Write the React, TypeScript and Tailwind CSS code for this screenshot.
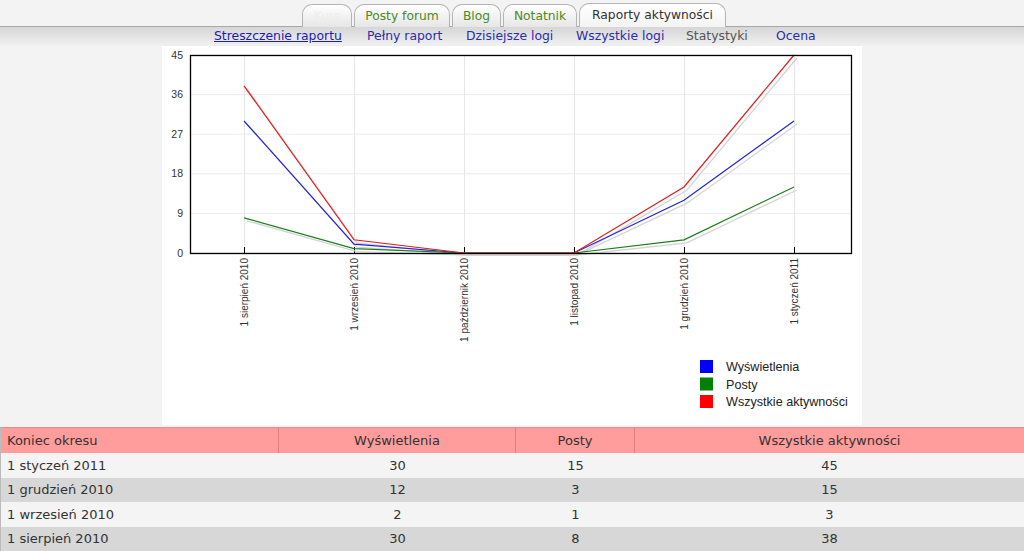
import React from "react";

const xs = [82, 192, 302, 412, 522, 632];
const yv = (v: number) => 207 - v * 4.4;
const series = [
  { color: "#2222dd", data: [30, 2, 0, 0, 12, 30] },
  { color: "#1b7d1b", data: [8, 1, 0, 0, 3, 15] },
  { color: "#e21b1b", data: [38, 3, 0, 0, 15, 45] },
];
const labels = [
  "1 sierpień 2010",
  "1 wrzesień 2010",
  "1 październik 2010",
  "1 listopad 2010",
  "1 grudzień 2010",
  "1 styczeń 2011",
];

function Chart() {
  const pts = (d: number[], dx = 0, dy = 0) =>
    d.map((v, i) => `${xs[i] + dx},${Math.min(yv(v) + dy, 209)}`).join(" ");
  return (
    <svg width="700" height="379" viewBox="0 0 700 379" style={{ fontFamily: "'Liberation Sans', Arial, sans-serif" }}>
      {[0, 9, 18, 27, 36, 45].map((t) => (
        <g key={t}>
          <line x1={28} x2={689} y1={yv(t)} y2={yv(t)} stroke="#ececec" strokeWidth="1" />
          <text x={21} y={yv(t) + 3.5} fontSize="10.5" fill="#333" textAnchor="end">
            {t}
          </text>
        </g>
      ))}
      {xs.map((x) => (
        <line key={x} x1={x + 0.5} x2={x + 0.5} y1={9} y2={207} stroke="#e6e6e6" strokeWidth="1" />
      ))}
      {xs.map((x) => (
        <line key={"t" + x} x1={x + 0.5} x2={x + 0.5} y1={201} y2={207} stroke="#000" strokeWidth="1" />
      ))}
      {series.map((s) => (
        <polyline key={"s" + s.color} points={pts(s.data, 3, 3)} fill="none" stroke="#d4d4d4" strokeWidth="1.3" />
      ))}
      {series.map((s) => (
        <polyline key={s.color} points={pts(s.data)} fill="none" stroke={s.color} strokeWidth="1.2" />
      ))}
      <rect x={28.5} y={9.5} width={661} height={198} fill="none" stroke="#000" strokeWidth="1.3" />
      {labels.map((l, i) => (
        <text
          key={l}
          transform={`translate(${xs[i] + 4},212) rotate(-90)`}
          textAnchor="end"
          fontSize="10"
          fill="#333"
        >
          {l}
        </text>
      ))}
      {[
        ["#0000ff", "Wyświetlenia"],
        ["#008000", "Posty"],
        ["#ff0000", "Wszystkie aktywności"],
      ].map(([c, t], i) => (
        <g key={t}>
          <rect x={538} y={314 + i * 17.5} width={13} height={13} fill={c} />
          <text x={564} y={325 + i * 17.5} fontSize="12.6" fill="#222">
            {t}
          </text>
        </g>
      ))}
    </svg>
  );
}

const tabs = [
  { t: "Kurs", w: "w-[50px]", c: "text-[#eeeeee]" },
  { t: "Posty forum", w: "w-[96px]", c: "text-[#4e8a22]" },
  { t: "Blog", w: "w-[49px]", c: "text-[#4e8a22]" },
  { t: "Notatnik", w: "w-[74px]", c: "text-[#4e8a22]" },
];

const rows = [
  ["1 styczeń 2011", "30", "15", "45"],
  ["1 grudzień 2010", "12", "3", "15"],
  ["1 wrzesień 2010", "2", "1", "3"],
  ["1 sierpień 2010", "30", "8", "38"],
];

export default function App() {
  return (
    <div
      className="w-[1024px] h-[551px] overflow-hidden bg-[#f3f3f3] text-[#333]"
      style={{ fontFamily: "'DejaVu Sans', Verdana, sans-serif" }}
    >
      {/* tabs */}
      <div className="h-[27px] flex items-end pl-[302px] gap-[2px] border-b border-[#a8a8a8]">
        {tabs.map((tb) => (
          <div
            key={tb.t}
            className={`${tb.w} ${tb.c} h-[23px] flex items-center justify-center text-[12.3px] rounded-t-[10px] border border-b-0 border-[#b4b4b4] bg-gradient-to-b from-white to-[#e6e6e6] mb-[-1px]`}
          >
            {tb.t}
          </div>
        ))}
        <div className="w-[147px] h-[24px] flex items-center justify-center text-[12.3px] text-[#333] rounded-t-[10px] border border-b-0 border-[#b4b4b4] bg-gradient-to-b from-white to-[#f3f3f3] mb-[-1px]">
          Raporty aktywności
        </div>
      </div>
      {/* sub nav */}
      <div className="h-[19px] flex items-center text-[12.4px] bg-gradient-to-b from-[#d6d6d6] to-[#f1f1f1] pl-[214px]">
        <span className="text-[#1c1cb4] underline w-[153px]">Streszczenie raportu</span>
        <span className="text-[#2d2da8] w-[99px]">Pełny raport</span>
        <span className="text-[#2d2da8] w-[110px]">Dzisiejsze logi</span>
        <span className="text-[#2d2da8] w-[110px]">Wszystkie logi</span>
        <span className="text-[#555] w-[90px]">Statystyki</span>
        <span className="text-[#2d2da8]">Ocena</span>
      </div>
      {/* chart */}
      <div className="pl-[162px]">
        <div className="w-[700px] h-[379px] bg-white">
          <Chart />
        </div>
      </div>
      {/* table */}
      <div className="mt-[2px] text-[12px] text-[#333] border-l border-[#bbb]">
        <div className="grid grid-cols-[278px_237px_119px_1fr] h-[26px] bg-[#ff9c9c] border-t border-[#e58c8c]">
          <div className="flex items-center pl-[6px] border-r border-[#e07f7f] text-[13px]">Koniec okresu</div>
          <div className="flex items-center justify-center border-r border-[#e07f7f] text-[13px]">Wyświetlenia</div>
          <div className="flex items-center justify-center border-r border-[#e07f7f] text-[13px]">Posty</div>
          <div className="flex items-center justify-center text-[13px]">Wszystkie aktywności</div>
        </div>
        {rows.map((r, i) => (
          <div
            key={r[0]}
            className={`grid grid-cols-[278px_237px_119px_1fr] h-[24.5px] ${i % 2 === 0 ? "bg-[#f4f4f4]" : "bg-[#d7d7d7]"}`}
          >
            <div className="flex items-center pl-[6px] text-[13px]">{r[0]}</div>
            <div className="flex items-center justify-center text-[13px]">{r[1]}</div>
            <div className="flex items-center justify-center text-[13px]">{r[2]}</div>
            <div className="flex items-center justify-center text-[13px]">{r[3]}</div>
          </div>
        ))}
      </div>
    </div>
  );
}
